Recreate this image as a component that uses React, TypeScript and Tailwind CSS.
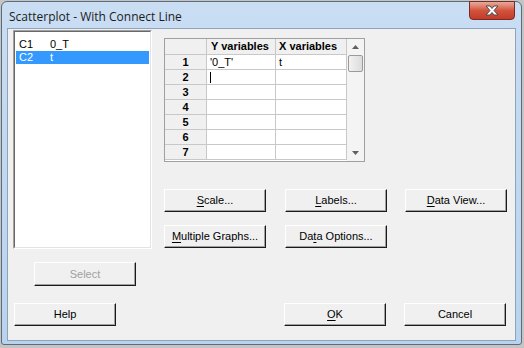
import React from "react";

const F = { fontFamily: '"Liberation Sans", Arial, sans-serif' };

function Btn({
  children,
  w = "w-[102px]",
  h = "h-[23px]",
  disabled = false,
  className = "",
}: {
  children: React.ReactNode;
  w?: string;
  h?: string;
  disabled?: boolean;
  className?: string;
}) {
  return (
    <div
      className={`${w} ${h} ${className} shrink-0 flex items-center justify-center bg-[#f0f0f0] border-t border-l border-t-white border-l-white border-b border-r border-b-[#1a1a1a] border-r-[#1a1a1a] shadow-[inset_-1px_-1px_0_#a0a0a0] text-[11px] ${
        disabled ? "text-[#a0a0a0]" : "text-black"
      }`}
      style={F}
    >
      {children}
    </div>
  );
}

const U = ({ c }: { c: string }) => <span className="underline underline-offset-2">{c}</span>;

const rows = [1, 2, 3, 4, 5, 6, 7];

export default function App() {
  return (
    <div className="w-[524px] h-[348px] bg-[#c4c4c4] overflow-hidden">
      <div className="ml-[1px] pt-[1px]">
        <div className="w-[521px] h-[344px] rounded-t-[6px] rounded-b-[3px] border border-[#5d6c7c] bg-gradient-to-b from-[#c9ddf3] to-[#b9d3ef] flex flex-col px-[5px] pb-[3px]">
          {/* title bar */}
          <div className="h-[26px] flex items-start shrink-0">
            <div
              className="pt-[6px] pl-[2px] text-[12px] text-[#1c1c1c] flex-1"
              style={{ fontFamily: '"Open Sans", "Noto Sans", sans-serif' }}
            >
              Scatterplot - With Connect Line
            </div>
            <div className="w-[46px] h-[19px] mr-[1px] -mt-[1px] rounded-b-[4px] border border-[#7a2a22] bg-gradient-to-b from-[#e9a99a] via-[#d2533e] to-[#c23b26] flex items-center justify-center">
              <svg width="16" height="11" viewBox="0 0 16 11">
                <path
                  d="M2 1 L6 1 L8 3.5 L10 1 L14 1 L10 5.5 L14 10 L10 10 L8 7.5 L6 10 L2 10 L6 5.5 Z"
                  fill="#ffffff"
                  stroke="#4a4a4a"
                  strokeWidth="1"
                  strokeLinejoin="round"
                />
              </svg>
            </div>
          </div>
          {/* client */}
          <div className="flex-1 border border-[#8fa3b8] bg-[#f0f0f0] flex flex-col" style={F}>
            <div className="flex">
              {/* left column */}
              <div className="ml-[5px] mt-[1px] flex flex-col">
                <div className="w-[139px] h-[219px] border border-t-[#a0a0a0] border-l-[#a0a0a0] border-b-white border-r-white">
                  <div className="w-full h-full border border-t-[#696969] border-l-[#696969] border-b-[#e3e3e3] border-r-[#e3e3e3] bg-white pt-[6px] px-[1px] text-[11px]">
                    <div className="h-[13px] flex items-center text-black">
                      <span className="w-[34px] pl-[3px]">C1</span>
                      <span>0_T</span>
                    </div>
                    <div className="h-[13px] flex items-center text-white bg-[#3399ff]">
                      <span className="w-[34px] pl-[3px]">C2</span>
                      <span>t</span>
                    </div>
                  </div>
                </div>
                <Btn disabled className="ml-[21px] mt-[13px]" h="h-[24px]">
                  Select
                </Btn>
              </div>
              {/* right column */}
              <div className="ml-[12px] mt-[9px] flex flex-col">
                <div className="w-[201px] h-[124px] border border-[#a0a0a0] bg-white flex">
                  <div className="w-[182px] flex flex-col text-[11px]">
                    <div className="h-[16px] flex bg-[#f0f0f0] border-b border-[#c8c8c8] font-bold">
                      <div className="w-[42px] border-r border-[#c8c8c8]" />
                      <div className="w-[69px] border-r border-[#c8c8c8] pl-[4px] flex items-center">Y variables</div>
                      <div className="flex-1 border-r border-[#c8c8c8] pl-[3px] flex items-center">X variables</div>
                    </div>
                    {rows.map((r) => (
                      <div key={r} className="h-[15px] flex border-b border-[#c8c8c8] shrink-0">
                        <div className="w-[42px] bg-[#f0f0f0] border-r border-[#c8c8c8] font-bold flex items-center justify-center">
                          {r}
                        </div>
                        <div className="w-[69px] border-r border-[#c8c8c8] pl-[3px] flex items-center">
                          {r === 1 ? "'0_T'" : r === 2 ? <span className="w-[1px] h-[11px] bg-black" /> : ""}
                        </div>
                        <div className="flex-1 border-r border-[#c8c8c8] pl-[3px] flex items-center">
                          {r === 1 ? "t" : ""}
                        </div>
                      </div>
                    ))}
                  </div>
                  <div className="w-[17px] bg-[#f4f4f4] flex flex-col items-center">
                    <div className="h-[16px] flex items-center justify-center">
                      <svg width="7" height="4" viewBox="0 0 7 4">
                        <path d="M0 4 L3.5 0 L7 4 Z" fill="#606060" />
                      </svg>
                    </div>
                    <div className="w-[15px] h-[17px] rounded-[2px] border border-[#9a9a9a] bg-gradient-to-r from-[#f2f2f2] to-[#dcdcdc]" />
                    <div className="flex-1" />
                    <div className="h-[16px] flex items-center justify-center">
                      <svg width="7" height="4" viewBox="0 0 7 4">
                        <path d="M0 0 L7 0 L3.5 4 Z" fill="#606060" />
                      </svg>
                    </div>
                  </div>
                </div>
                <div className="flex mt-[27px]">
                  <Btn>
                    <U c="S" />cale...
                  </Btn>
                  <Btn className="ml-[19px]">
                    <U c="L" />abels...
                  </Btn>
                  <Btn className="ml-[18px]">
                    <U c="D" />ata View...
                  </Btn>
                </div>
                <div className="flex mt-[13px]">
                  <Btn>
                    <U c="M" />ultiple Graphs...
                  </Btn>
                  <Btn className="ml-[19px]">
                    Da<U c="t" />a Options...
                  </Btn>
                </div>
              </div>
            </div>
            <div className="flex mt-[17px]">
              <Btn className="ml-[6px]">Help</Btn>
              <Btn className="ml-[168px]">
                <U c="O" />K
              </Btn>
              <Btn className="ml-[18px]">Cancel</Btn>
            </div>
          </div>
        </div>
      </div>
    </div>
  );
}
